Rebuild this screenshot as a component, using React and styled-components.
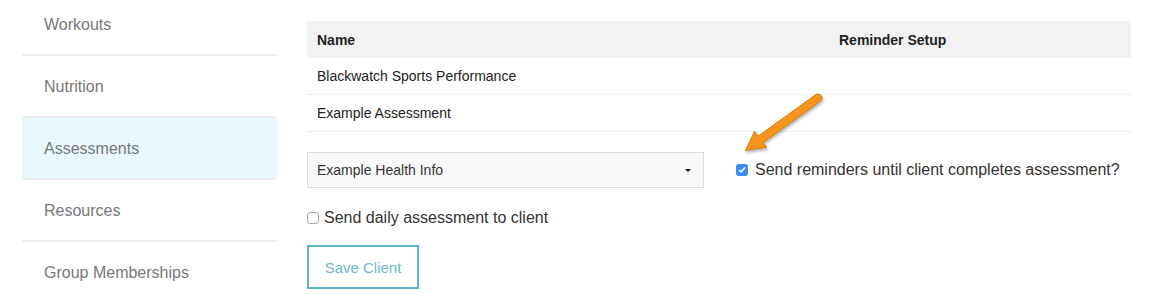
import React from "react";
import styled, { createGlobalStyle } from "styled-components";

const GlobalStyle = createGlobalStyle`
  body {
    margin: 0;
    background: #fff;
    font-family: "Liberation Sans", Arial, Helvetica, sans-serif;
    overflow: hidden;
  }
`;

const Page = styled.div`
  position: relative;
  display: flex;
  gap: 30px;
  padding: 0 21px 0 22px;
  height: 294px;
  overflow: hidden;
`;

const Sidebar = styled.nav`
  width: 255px;
  flex-shrink: 0;
  margin-top: -6px;
`;

const NavItem = styled.div`
  height: 62px;
  box-sizing: border-box;
  padding: 2px 0 0 22px;
  display: flex;
  align-items: center;
  border-bottom: 2px solid #eeeeee;
  font-size: 16px;
  color: #777;
  background: ${({ active }) => (active ? "#e8f8fc" : "transparent")};
`;

const Main = styled.main`
  flex: 1;
  padding-top: 21px;
`;

const Table = styled.div`
  font-size: 14px;
  color: #222;
`;

const Row = styled.div`
  display: grid;
  grid-template-columns: 522px 1fr;
  align-items: center;
  height: ${({ head }) => (head ? "37px" : "36px")};
  background: ${({ head }) => (head ? "#f2f2f2" : "transparent")};
  font-weight: ${({ head }) => (head ? "bold" : "normal")};
  border-bottom: ${({ head }) => (head ? "none" : "1px solid #eeeeee")};
`;

const Cell = styled.div`
  padding: 0 10px;
`;

const FormRow = styled.div`
  display: flex;
  margin-top: 20px;
`;

const Col = styled.div`
  width: 412px;
  box-sizing: border-box;
  padding-right: 15px;
`;

const RightCol = styled.div`
  flex: 1;
  padding-left: 17px;
  display: flex;
  align-items: center;
`;

const Select = styled.div`
  height: 36px;
  box-sizing: border-box;
  border: 1px solid #dddddd;
  background: #f9f9f9;
  padding: 0 12px 0 9px;
  display: flex;
  align-items: center;
  justify-content: space-between;
  font-size: 14px;
  color: #333;
`;

const Caret = styled.span`
  width: 0;
  height: 0;
  border-left: 3px solid transparent;
  border-right: 3px solid transparent;
  border-top: 3px solid #111;
  margin-top: 1px;
`;

const CheckLabel = styled.label`
  display: flex;
  align-items: center;
  gap: ${({ gap }) => gap || 7}px;
  font-size: 16px;
  color: #333;
  margin-top: ${({ mt }) => mt || 0}px;
`;

const Box = styled.span`
  width: 12px;
  height: 12px;
  box-sizing: border-box;
  border-radius: 3px;
  display: inline-flex;
  align-items: center;
  justify-content: center;
  flex-shrink: 0;
  background: ${({ checked }) => (checked ? "#3a8cf0" : "#fff")};
  border: ${({ checked }) => (checked ? "none" : "1px solid #a8a8a8")};
`;

const SaveButton = styled.button`
  margin-top: 18px;
  width: 112px;
  height: 44px;
  background: #fff;
  border: 2px solid #5bb6cc;
  color: #6ab9cd;
  font-family: inherit;
  font-size: 15px;
  padding: 0;
`;

const ArrowLayer = styled.svg`
  position: absolute;
  left: 0;
  top: 0;
  pointer-events: none;
`;

const Checkbox = ({ checked }) => (
  <Box checked={checked}>
    {checked && (
      <svg width="8" height="8" viewBox="0 0 8 8">
        <path d="M1.3 4.2 L3.2 6 L6.8 1.8" fill="none" stroke="#fff" strokeWidth="1.5" strokeLinecap="round" strokeLinejoin="round" />
      </svg>
    )}
  </Box>
);

const navItems = ["Workouts", "Nutrition", "Assessments", "Resources", "Group Memberships"];
const assessments = ["Blackwatch Sports Performance", "Example Assessment"];

export default function App() {
  return (
    <>
      <GlobalStyle />
      <Page>
        <Sidebar>
          {navItems.map((item) => (
            <NavItem key={item} active={item === "Assessments"}>
              {item}
            </NavItem>
          ))}
        </Sidebar>

        <Main>
          <Table>
            <Row head>
              <Cell>Name</Cell>
              <Cell>Reminder Setup</Cell>
            </Row>
            {assessments.map((name) => (
              <Row key={name}>
                <Cell>{name}</Cell>
                <Cell />
              </Row>
            ))}
          </Table>

          <FormRow>
            <Col>
              <Select>
                Example Health Info
                <Caret />
              </Select>
            </Col>
            <RightCol>
              <CheckLabel>
                <Checkbox checked />
                Send reminders until client completes assessment?
              </CheckLabel>
            </RightCol>
          </FormRow>

          <CheckLabel mt={21} gap={5}>
            <Checkbox />
            Send daily assessment to client
          </CheckLabel>

          <SaveButton>Save Client</SaveButton>
        </Main>

        {/* annotation arrow drawn over the page */}
        <ArrowLayer width="1152" height="294" viewBox="0 0 1152 294">
          <defs>
            <filter id="shadow" x="-20%" y="-20%" width="140%" height="140%">
              <feDropShadow dx="1" dy="2" stdDeviation="1.5" floodColor="#000" floodOpacity="0.3" />
            </filter>
          </defs>
          <path
            d="M815.6 94.8 L758.1 136.2 L754.6 131.3 L745.5 150.5 L766.6 147.3 L763 142.6 L820.4 101.2 A4 4 0 0 0 815.6 94.8 Z"
            fill="#f7941d"
            stroke="#cf7a14"
            strokeWidth="1"
            strokeLinejoin="round"
            filter="url(#shadow)"
          />
        </ArrowLayer>
      </Page>
    </>
  );
}
